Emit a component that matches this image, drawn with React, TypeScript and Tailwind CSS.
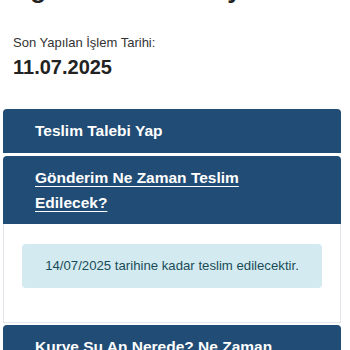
import React from 'react';

const font = { fontFamily: '"Liberation Sans", Arial, sans-serif' };

export default function App() {
  return (
    <div className="min-h-[350px] w-[350px] overflow-hidden bg-white" style={font}>
      <div className="-mt-[26px] px-[13px]">
        <h1 className="whitespace-nowrap text-[26px] font-bold leading-[30px] text-[#222]">Eğitim Alanı Alt Ayarı</h1>
      </div>

      <div className="px-[13px] pt-[30px]">
        <p className="text-[13px] leading-[18px] text-[#333]">Son Yapılan İşlem Tarihi:</p>
        <p className="mt-[2px] text-[20px] font-bold leading-[26px] text-[#222]">11.07.2025</p>
      </div>

      <div className="mt-[29px] ml-[3px] w-[338px]">
        {/* Teslim talebi */}
        <div className="rounded-t-[4px] bg-[#214c75] px-[32px] py-[10px]">
          <span className="text-[15.5px] font-bold leading-[24px] text-white">Teslim Talebi Yap</span>
        </div>

        {/* Teslim zamanı */}
        <div className="mt-[3px]">
          <div className="rounded-t-[4px] bg-[#214c75] px-[32px] py-[9px]">
            <a className="text-[15.5px] font-bold leading-[25px] text-white underline underline-offset-[3px]">
              Gönderim Ne Zaman Teslim Edilecek?
            </a>
          </div>
          <div className="border border-t-0 border-[#e3e6ea] px-[18px] pt-[20px] pb-[34px]">
            <div className="rounded-[4px] bg-[#d3ebf0] py-[12px] text-center text-[13.2px] leading-[20px] text-[#1a4b58]">
              14/07/2025 tarihine kadar teslim edilecektir.
            </div>
          </div>
        </div>

        {/* Kurye */}
        <div className="mt-[2px] rounded-t-[4px] bg-[#214c75] px-[32px] py-[9px]">
          <span className="text-[15.5px] font-bold leading-[25px] text-white">
            Kurye Şu An Nerede? Ne Zaman Gelecek?
          </span>
        </div>
      </div>
    </div>
  );
}
